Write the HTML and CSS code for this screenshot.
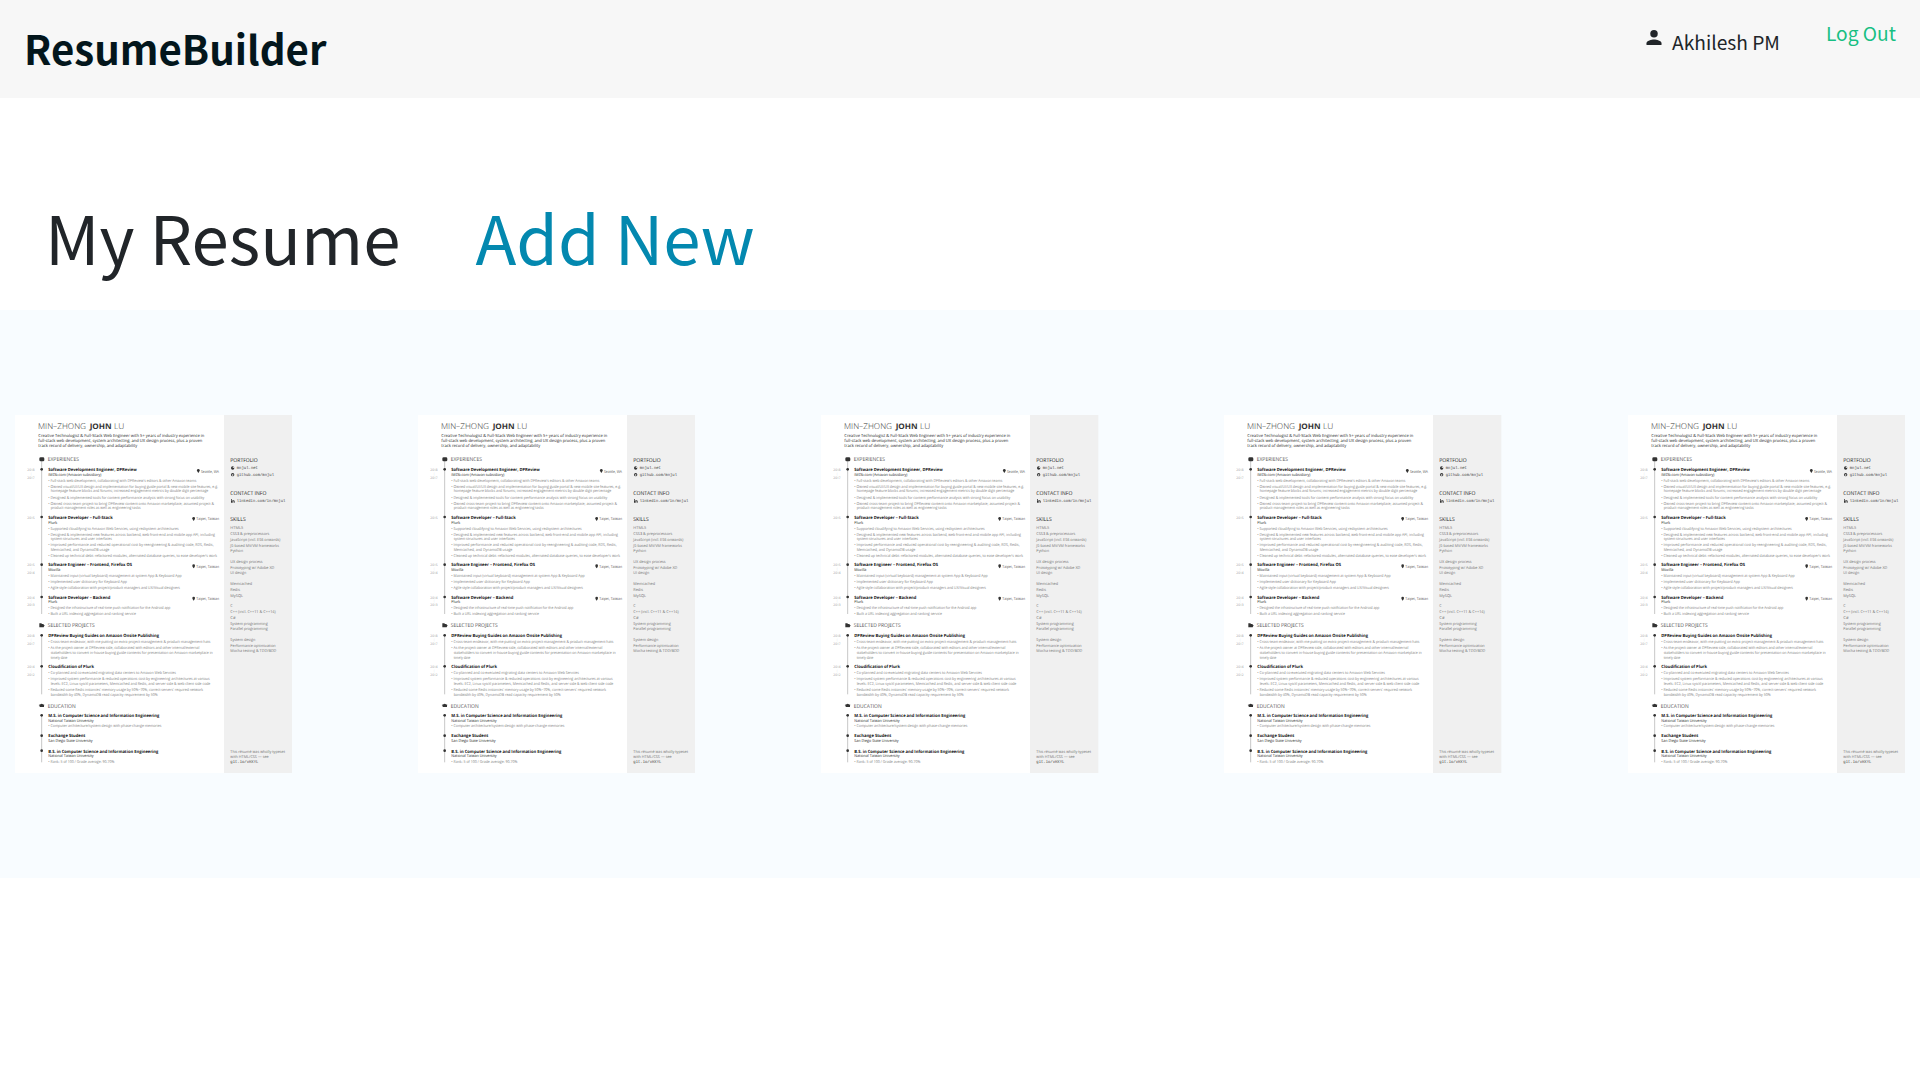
FILE: index.html
```html
<!DOCTYPE html>
<html lang="en">
<head>
<meta charset="utf-8">
<title>ResumeBuilder</title>
<link rel="stylesheet" href="styles.css">
</head>
<body>
<header class="topbar">
  <div class="brand">ResumeBuilder</div>
  <nav class="account">
    <div class="user">
      <svg class="user-icon" viewBox="0 0 16 16"><circle cx="8" cy="4" r="4"/><path d="M0 16v-2c0-2.700 5.300-4 8-4s8 1.300 8 4v2z"/></svg>
      <span class="user-name">Akhilesh PM</span>
    </div>
    <a class="logout">Log Out</a>
  </nav>
</header>
<div class="heading">
  <h1 class="title">My Resume</h1>
  <a class="add">Add New</a>
</div>
<main class="gallery" id="gallery"></main>
<script src="resumes.js"></script>
</body>
</html>
```
FILE: styles.css
```css
body {
  margin: 0;
  background: #fff;
  color: #212529;
  font-family: "Noto Sans CJK SC", sans-serif;
}
.topbar {
  height: 98px;
  background: #f7f7f7;
  display: flex;
  justify-content: space-between;
}
.brand {
  padding-left: 24px;
  font-size: 40.200px;
  font-weight: 700;
  line-height: 95px;
  color: #03161c;
}
.account {
  display: flex;
  padding-right: 24px;
  gap: 46px;
  font-size: 19.200px;
  line-height: 30px;
}
.user {
  display: flex;
  gap: 10px;
}
.user-icon {
  width: 16px;
  height: 15px;
  margin-top: 30px;
  fill: #212529;
}
.user-name { padding-top: 27px; }
.logout { padding-top: 18px; color: #17bf83; }
.heading {
  height: 124px;
  padding: 88px 0 0 45px;
  display: flex;
  gap: 75px;
  font-size: 67.200px;
  line-height: 100px;
}
.title { margin: 0; font-size: inherit; font-weight: 400; }
.add { color: #0388af; }
.gallery {
  height: 568px;
  padding: 0 15px;
  box-sizing: border-box;
  background: #f8fcff;
  display: flex;
  justify-content: space-between;
  align-items: center;
}
.resume {
  width: 277.330px;
  height: 358px;
  font-family: "Open Sans", sans-serif;
  text-rendering: geometricPrecision;
  fill: #333;
}
.paper { fill: #fff; }
.side { fill: #f0f0f0; }
.rail { stroke: #aaa; stroke-width: 2; fill: none; }
.name { font-size: 24px; font-weight: 300; }
.strong { font-size: 23px; font-weight: 700; }
.intro { font-size: 12.500px; fill: #222; }
.section { font-size: 16px; font-weight: 400; fill: #555; }
.sidehead { font-size: 16px; fill: #222; }
.job { font-size: 13px; font-weight: 700; fill: #111; }
.org { font-size: 12px; fill: #222; }
.item { font-size: 12px; fill: #808080; }
.place { font-size: 12px; fill: #555; }
.year { font-size: 10px; fill: #999; }
.skill { font-size: 12px; fill: #707070; }
.link { font-family: "Liberation Mono", monospace; font-size: 12.500px; fill: #444; }
```
FILE: resumes.js
```js
// Each row: class, x, baseline, width, text
const lines = [
  ["name", 122, 57, 144, "MIN–ZHONG"],
  ["strong", 277, 57, 66, "JOHN"],
  ["name", 350, 57, 31, "LU"],
  ["intro", 123, 80, 498, "Creative Technologist & Full-Stack Web Engineer with 5+ years of industry experience in"],
  ["intro", 123, 96, 492, "full-stack web development, system architecting, and UX design process, plus a proven"],
  ["intro", 123, 112, 297, "track record of delivery, ownership, and adaptability"],
  ["section", 151, 154, 94, "EXPERIENCES"],
  ["job", 153, 184, 265, "Software Development Engineer, DPReview"],
  ["org", 153, 198, 159, "IMDb.com (Amazon subsidiary)"],
  ["place", 611, 188, 54, "Seattle, WA"],
  ["item", 153, 216, 444, "• Full-stack web development, collaborating with DPReview's editors & other Amazon teams"],
  ["item", 153, 234, 509, "• Owned visual/UI/UX design and implementation for buying guide portal & new mobile site features, e.g."],
  ["item", 160, 247, 473, "homepage feature blocks and forums; increased engagement metrics by double digit percentage"],
  ["item", 153, 266, 468, "• Designed & implemented tools for content performance analysis with strong focus on usability"],
  ["item", 153, 284, 497, "• Owned cross-team project to bring DPReview content onto Amazon marketplace; assumed project &"],
  ["item", 160, 298, 270, "product management roles as well as engineering tasks"],
  ["job", 153, 327, 193, "Software Developer – Full-Stack"],
  ["org", 153, 341, 27, "Plurk"],
  ["place", 597, 331, 68, "Taipei, Taiwan"],
  ["item", 153, 359, 391, "• Supported cloudifying to Amazon Web Services, using redsystem architectures"],
  ["item", 153, 377, 500, "• Designed & implemented new features across backend, web front-end and mobile app API, including"],
  ["item", 160, 390, 184, "system structures and user interfaces"],
  ["item", 153, 409, 496, "• Improved performance and reduced operational cost by reengineering & auditing code, RDS, Redis,"],
  ["item", 160, 422, 176, "Memcached, and DynamoDB usage"],
  ["item", 153, 440, 506, "• Cleaned up technical debt: refactored modules, alternated database queries, to ease developer's work"],
  ["job", 153, 469, 251, "Software Engineer – Frontend, Firefox OS"],
  ["org", 153, 483, 36, "Mozilla"],
  ["place", 597, 474, 68, "Taipei, Taiwan"],
  ["item", 153, 501, 400, "• Maintained input (virtual keyboard) management at system App & Keyboard App"],
  ["item", 153, 520, 236, "• Implemented user dictionary for Keyboard App"],
  ["item", 153, 538, 395, "• Agile style collaboration with project/product managers and UX/Visual designers"],
  ["job", 153, 566, 186, "Software Developer – Backend"],
  ["org", 153, 580, 27, "Plurk"],
  ["place", 597, 571, 68, "Taipei, Taiwan"],
  ["item", 153, 598, 366, "• Designed the infrastructure of real-time push notification for the Android app"],
  ["item", 153, 616, 263, "• Built a URL indexing aggregation and ranking service"],
  ["section", 151, 652, 141, "SELECTED PROJECTS"],
  ["job", 153, 682, 332, "DPReview Buying Guides on Amazon Onsite Publishing"],
  ["item", 153, 700, 486, "• Cross-team endeavor, with me putting on extra project management & product management hats"],
  ["item", 153, 718, 453, "• As the project owner at DPReview side, collaborated with editors and other internal/external"],
  ["item", 160, 731, 486, "stakeholders to convert in-house buying guide contents for presentation on Amazon marketplace in"],
  ["item", 160, 746, 50, "timely date"],
  ["job", 153, 774, 137, "Cloudification of Plurk"],
  ["item", 153, 793, 383, "• Co-planned and co-executed migrating data centers to Amazon Web Services"],
  ["item", 153, 811, 484, "• Improved system performance & reduced operations cost by engineering architectures at various"],
  ["item", 160, 824, 479, "levels: EC2, Linux sysctl parameters, Memcached and Redis, and server side & web client side code"],
  ["item", 153, 843, 464, "• Reduced some Redis instances' memory usage by 50%~70%, correct servers' required network"],
  ["item", 160, 857, 321, "bandwidth by 40%, DynamoDB read capacity requirement by 50%"],
  ["section", 151, 893, 84, "EDUCATION"],
  ["job", 153, 922, 333, "M.S. in Computer Science and Information Engineering"],
  ["org", 153, 937, 136, "National Taiwan University"],
  ["item", 153, 952, 339, "• Computer architecture/system design with phase-change memories"],
  ["job", 153, 982, 111, "Exchange Student"],
  ["org", 153, 997, 133, "San Diego State University"],
  ["job", 153, 1028, 330, "B.S. in Computer Science and Information Engineering"],
  ["org", 153, 1042, 136, "National Taiwan University"],
  ["item", 153, 1058, 198, "• Rank: 5 of 100 / Grade average: 90.70%"],
  ["sidehead", 699, 155, 82, "PORTFOLIO"],
  ["link", 718, 178, 64, "mnjul.net"],
  ["link", 718, 198, 112, "github.com/mnjul"],
  ["sidehead", 699, 254, 108, "CONTACT INFO"],
  ["link", 718, 277, 146, "linkedin.com/in/mnjul"],
  ["sidehead", 699, 334, 46, "SKILLS"],
  ["skill", 699, 358, 39, "HTML5"],
  ["skill", 699, 375, 117, "CSS3 & preprocessors"],
  ["skill", 699, 392, 150, "JavaScript (incl. ES6 onwards)"],
  ["skill", 699, 410, 146, "JS-based MV/VM frameworks"],
  ["skill", 699, 427, 38, "Python"],
  ["skill", 699, 459, 97, "UX design process"],
  ["skill", 699, 476, 132, "Prototyping w/ Adobe XD"],
  ["skill", 699, 493, 48, "UI design"],
  ["skill", 699, 525, 65, "Memcached"],
  ["skill", 699, 542, 29, "Redis"],
  ["skill", 699, 560, 38, "MySQL"],
  ["skill", 699, 592, 7, "C"],
  ["skill", 699, 609, 136, "C++ (incl. C++11 & C++14)"],
  ["skill", 699, 626, 16, "C#"],
  ["skill", 699, 644, 112, "System programming"],
  ["skill", 699, 661, 112, "Parallel programming"],
  ["skill", 699, 693, 75, "System design"],
  ["skill", 699, 710, 136, "Performance optimization"],
  ["skill", 699, 727, 138, "Mocha testing & TDD/BDD"],
  ["skill", 699, 1028, 164, "This résumé was wholly typeset"],
  ["skill", 699, 1043, 115, "with HTML/CSS — see"],
  ["link", 699, 1058, 84, "git.io/vHXYL"],
  ["year", 90, 183, 22, "2018"], ["year", 100, 194, 2, "|"], ["year", 90, 206, 22, "2017"],
  ["year", 90, 326, 22, "2015"],
  ["year", 90, 469, 22, "2015"], ["year", 100, 480, 2, "|"], ["year", 90, 492, 22, "2014"],
  ["year", 90, 566, 22, "2014"], ["year", 100, 577, 2, "|"], ["year", 90, 588, 22, "2013"],
  ["year", 90, 681, 22, "2018"], ["year", 100, 692, 2, "|"], ["year", 90, 704, 22, "2017"],
  ["year", 90, 774, 22, "2014"], ["year", 100, 785, 2, "|"], ["year", 90, 797, 22, "2012"]
];

const escapeText = s => s.replace(/&/g, "&amp;");
const text = lines.map(([c, x, y, w, t]) =>
  `<text class="${c}" x="${x}" y="${y}" textLength="${w}" lengthAdjust="spacingAndGlyphs">${escapeText(t)}</text>`).join("");
const dots = [178, 321, 464, 561, 676, 769, 916, 977, 1022]
  .map(y => `<circle cx="133" cy="${y}" r="4"/>`).join("");
const pins = [[603, 183], [589, 327], [589, 469], [589, 566]]
  .map(([x, y]) => `<path d="M${x - 4} ${y - 2}a4 4 0 0 1 8 0q0 3-4 8q-4-5-4-8z"/>`).join("");

const resume = `<svg class="resume" viewBox="53 15 832 1074" preserveAspectRatio="none">
  <rect class="paper" x="53" y="15" width="627" height="1074"/>
  <rect class="side" x="680" y="15" width="205" height="1074"/>
  <path class="rail" d="M133 150V612M133 676V853M133 916V1057"/>
  ${dots}${pins}
  <rect x="126" y="142" width="15" height="12" rx="4"/>
  <path d="M126 640h6l2 2h5v3h3l-3 7h-13z"/>
  <path d="M124 885l9-4 9 4-2 1v5h-13v-4z"/>
  <circle cx="706" cy="174" r="5"/><circle class="side" cx="708" cy="172" r="2"/>
  <circle cx="706" cy="194" r="5"/><circle class="side" cx="706" cy="195" r="2.500"/>
  <path d="M701 271h3v7h-3zM705 271h3q4 0 4 3v4h-3v-4h-2v4h-2zM701 268h3v2h-3z"/>
  ${text}</svg>`;

document.getElementById("gallery").innerHTML = resume.repeat(5);
```
